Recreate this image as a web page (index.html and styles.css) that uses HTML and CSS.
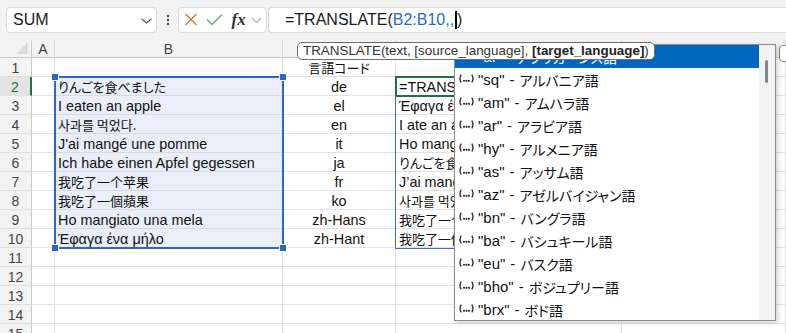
FILE: index.html
```html
<!DOCTYPE html>
<html>
<head>
<meta charset="utf-8">
<link rel="stylesheet" href="styles.css">
</head>
<body>
<div class="app">
  <div class="topbar">
    <div class="namebox">
      <span>SUM</span>
      <svg class="chev" width="11" height="6" viewBox="0 0 11 6"><polyline points="0.5,0.8 5.5,5 10.5,0.8" fill="none" stroke="#555" stroke-width="1.2"/></svg>
    </div>
    <div class="dots">
      <svg width="21" height="26" viewBox="0 0 21 26"><circle cx="11" cy="9" r="1.2" fill="#444"/><circle cx="11" cy="13" r="1.2" fill="#444"/><circle cx="11" cy="17" r="1.2" fill="#444"/></svg>
    </div>
    <div class="fbtns">
      <svg width="88" height="24" viewBox="0 0 88 24">
        <line x1="6.5" y1="6" x2="17.5" y2="17" stroke="#d4793a" stroke-width="1.5"/>
        <line x1="17.5" y1="6" x2="6.5" y2="17" stroke="#d4793a" stroke-width="1.5"/>
        <polyline points="28,11.5 33,16.5 43,6.5" fill="none" stroke="#6aab7e" stroke-width="1.5"/>
        <text x="52.5" y="17" class="fx">fx</text>
        <polyline points="73,10 77.5,14.5 82,10" fill="none" stroke="#b3b3b3" stroke-width="1.2"/>
      </svg>
    </div>
    <div class="formula"><span class="fn">=TRANSLATE(</span><span class="ref">B2:B10,,</span><span class="caret"></span><span class="fn">)</span></div>
  </div>

  <div class="grid">
    <div class="corner"><svg width="12" height="12" viewBox="0 0 12 12"><polygon points="12,0 12,12 0,12" fill="#dcdcdc"/></svg></div>
    <div class="ch">A</div><div class="ch">B</div><div class="ch">C</div><div class="ch">D</div><div class="ch">E</div>

    <div class="rh">1</div><div class="c"></div><div class="c"></div><div class="c ctr"><span class="ja">言語コード</span></div><div class="c"></div><div class="c"></div>
    <div class="rh act">2</div><div class="c"></div><div class="c sel"><span class="ja">りんごを食べました</span></div><div class="c ctr">de</div><div class="c">=TRANSLATE(B2:B10,,)</div><div class="c"></div>
    <div class="rh">3</div><div class="c"></div><div class="c sel">I eaten an apple</div><div class="c ctr">el</div><div class="c">Έφαγα ένα μήλο</div><div class="c"></div>
    <div class="rh">4</div><div class="c"></div><div class="c sel"><span class="ko">사과를 먹었다.</span></div><div class="c ctr">en</div><div class="c">I ate an apple</div><div class="c"></div>
    <div class="rh">5</div><div class="c"></div><div class="c sel">J'ai mangé une pomme</div><div class="c ctr">it</div><div class="c">Ho mangiato una mela</div><div class="c"></div>
    <div class="rh">6</div><div class="c"></div><div class="c sel">Ich habe einen Apfel gegessen</div><div class="c ctr">ja</div><div class="c"><span class="ja">りんごを食べました</span></div><div class="c"></div>
    <div class="rh">7</div><div class="c"></div><div class="c sel"><span class="zh">我吃了一个苹果</span></div><div class="c ctr">fr</div><div class="c">J’ai mangé une pomme</div><div class="c"></div>
    <div class="rh">8</div><div class="c"></div><div class="c sel"><span class="tc">我吃了一個蘋果</span></div><div class="c ctr">ko</div><div class="c"><span class="ko">사과를 먹었다.</span></div><div class="c"></div>
    <div class="rh">9</div><div class="c"></div><div class="c sel">Ho mangiato una mela</div><div class="c ctr">zh-Hans</div><div class="c"><span class="zh">我吃了一个苹果</span></div><div class="c"></div>
    <div class="rh">10</div><div class="c"></div><div class="c sel">Έφαγα ένα μήλο</div><div class="c ctr">zh-Hant</div><div class="c"><span class="tc">我吃了一個蘋果</span></div><div class="c"></div>
    <div class="rh">11</div><div class="c"></div><div class="c"></div><div class="c"></div><div class="c"></div><div class="c"></div>
    <div class="rh">12</div><div class="c"></div><div class="c"></div><div class="c"></div><div class="c"></div><div class="c"></div>
    <div class="rh">13</div><div class="c"></div><div class="c"></div><div class="c"></div><div class="c"></div><div class="c"></div>
    <div class="rh">14</div><div class="c"></div><div class="c"></div><div class="c"></div><div class="c"></div><div class="c"></div>
    <div class="rh">15</div><div class="c"></div><div class="c"></div><div class="c"></div><div class="c"></div><div class="c"></div>
  </div>

  <div class="selbox"></div>
  <div class="handle h-tl"></div>
  <div class="handle h-tr"></div>
  <div class="handle h-bl"></div>
  <div class="handle h-br"></div>
  <div class="spill"></div>
  <div class="active"></div>

  <div class="edgebox"></div>

  <div class="dropdown">
    <div class="list">
      <div class="item hl"><svg class="ic" width="17" height="9" viewBox="0 0 17 9"><path d="M3.2 0.6 Q0.8 4.5 3.2 8.4 M13.8 0.6 Q16.2 4.5 13.8 8.4" fill="none" stroke="#fff" stroke-width="1.4"/><circle cx="6" cy="6.8" r="1.1" fill="#fff"/><circle cx="8.5" cy="6.8" r="1.1" fill="#fff"/><circle cx="11" cy="6.8" r="1.1" fill="#fff"/></svg><span>"af"</span><span class="dash">-</span><span class="jp">アフリカーンス語</span></div>
      <div class="item"><svg class="ic" width="17" height="9" viewBox="0 0 17 9"><path d="M3.2 0.6 Q0.8 4.5 3.2 8.4 M13.8 0.6 Q16.2 4.5 13.8 8.4" fill="none" stroke="#333" stroke-width="1.4"/><circle cx="6" cy="6.8" r="1.1" fill="#333"/><circle cx="8.5" cy="6.8" r="1.1" fill="#333"/><circle cx="11" cy="6.8" r="1.1" fill="#333"/></svg><span>"sq"</span><span class="dash">-</span><span class="jp">アルバニア語</span></div>
      <div class="item"><svg class="ic" width="17" height="9" viewBox="0 0 17 9"><path d="M3.2 0.6 Q0.8 4.5 3.2 8.4 M13.8 0.6 Q16.2 4.5 13.8 8.4" fill="none" stroke="#333" stroke-width="1.4"/><circle cx="6" cy="6.8" r="1.1" fill="#333"/><circle cx="8.5" cy="6.8" r="1.1" fill="#333"/><circle cx="11" cy="6.8" r="1.1" fill="#333"/></svg><span>"am"</span><span class="dash">-</span><span class="jp">アムハラ語</span></div>
      <div class="item"><svg class="ic" width="17" height="9" viewBox="0 0 17 9"><path d="M3.2 0.6 Q0.8 4.5 3.2 8.4 M13.8 0.6 Q16.2 4.5 13.8 8.4" fill="none" stroke="#333" stroke-width="1.4"/><circle cx="6" cy="6.8" r="1.1" fill="#333"/><circle cx="8.5" cy="6.8" r="1.1" fill="#333"/><circle cx="11" cy="6.8" r="1.1" fill="#333"/></svg><span>"ar"</span><span class="dash">-</span><span class="jp">アラビア語</span></div>
      <div class="item"><svg class="ic" width="17" height="9" viewBox="0 0 17 9"><path d="M3.2 0.6 Q0.8 4.5 3.2 8.4 M13.8 0.6 Q16.2 4.5 13.8 8.4" fill="none" stroke="#333" stroke-width="1.4"/><circle cx="6" cy="6.8" r="1.1" fill="#333"/><circle cx="8.5" cy="6.8" r="1.1" fill="#333"/><circle cx="11" cy="6.8" r="1.1" fill="#333"/></svg><span>"hy"</span><span class="dash">-</span><span class="jp">アルメニア語</span></div>
      <div class="item"><svg class="ic" width="17" height="9" viewBox="0 0 17 9"><path d="M3.2 0.6 Q0.8 4.5 3.2 8.4 M13.8 0.6 Q16.2 4.5 13.8 8.4" fill="none" stroke="#333" stroke-width="1.4"/><circle cx="6" cy="6.8" r="1.1" fill="#333"/><circle cx="8.5" cy="6.8" r="1.1" fill="#333"/><circle cx="11" cy="6.8" r="1.1" fill="#333"/></svg><span>"as"</span><span class="dash">-</span><span class="jp">アッサム語</span></div>
      <div class="item"><svg class="ic" width="17" height="9" viewBox="0 0 17 9"><path d="M3.2 0.6 Q0.8 4.5 3.2 8.4 M13.8 0.6 Q16.2 4.5 13.8 8.4" fill="none" stroke="#333" stroke-width="1.4"/><circle cx="6" cy="6.8" r="1.1" fill="#333"/><circle cx="8.5" cy="6.8" r="1.1" fill="#333"/><circle cx="11" cy="6.8" r="1.1" fill="#333"/></svg><span>"az"</span><span class="dash">-</span><span class="jp">アゼルバイジャン語</span></div>
      <div class="item"><svg class="ic" width="17" height="9" viewBox="0 0 17 9"><path d="M3.2 0.6 Q0.8 4.5 3.2 8.4 M13.8 0.6 Q16.2 4.5 13.8 8.4" fill="none" stroke="#333" stroke-width="1.4"/><circle cx="6" cy="6.8" r="1.1" fill="#333"/><circle cx="8.5" cy="6.8" r="1.1" fill="#333"/><circle cx="11" cy="6.8" r="1.1" fill="#333"/></svg><span>"bn"</span><span class="dash">-</span><span class="jp">バングラ語</span></div>
      <div class="item"><svg class="ic" width="17" height="9" viewBox="0 0 17 9"><path d="M3.2 0.6 Q0.8 4.5 3.2 8.4 M13.8 0.6 Q16.2 4.5 13.8 8.4" fill="none" stroke="#333" stroke-width="1.4"/><circle cx="6" cy="6.8" r="1.1" fill="#333"/><circle cx="8.5" cy="6.8" r="1.1" fill="#333"/><circle cx="11" cy="6.8" r="1.1" fill="#333"/></svg><span>"ba"</span><span class="dash">-</span><span class="jp">バシュキール語</span></div>
      <div class="item"><svg class="ic" width="17" height="9" viewBox="0 0 17 9"><path d="M3.2 0.6 Q0.8 4.5 3.2 8.4 M13.8 0.6 Q16.2 4.5 13.8 8.4" fill="none" stroke="#333" stroke-width="1.4"/><circle cx="6" cy="6.8" r="1.1" fill="#333"/><circle cx="8.5" cy="6.8" r="1.1" fill="#333"/><circle cx="11" cy="6.8" r="1.1" fill="#333"/></svg><span>"eu"</span><span class="dash">-</span><span class="jp">バスク語</span></div>
      <div class="item"><svg class="ic" width="17" height="9" viewBox="0 0 17 9"><path d="M3.2 0.6 Q0.8 4.5 3.2 8.4 M13.8 0.6 Q16.2 4.5 13.8 8.4" fill="none" stroke="#333" stroke-width="1.4"/><circle cx="6" cy="6.8" r="1.1" fill="#333"/><circle cx="8.5" cy="6.8" r="1.1" fill="#333"/><circle cx="11" cy="6.8" r="1.1" fill="#333"/></svg><span>"bho"</span><span class="dash">-</span><span class="jp">ボジュプリー語</span></div>
      <div class="item"><svg class="ic" width="17" height="9" viewBox="0 0 17 9"><path d="M3.2 0.6 Q0.8 4.5 3.2 8.4 M13.8 0.6 Q16.2 4.5 13.8 8.4" fill="none" stroke="#333" stroke-width="1.4"/><circle cx="6" cy="6.8" r="1.1" fill="#333"/><circle cx="8.5" cy="6.8" r="1.1" fill="#333"/><circle cx="11" cy="6.8" r="1.1" fill="#333"/></svg><span>"brx"</span><span class="dash">-</span><span class="jp">ボド語</span></div>
    </div>
    <div class="scroll"><div class="thumb"></div></div>
  </div>

  <div class="tip">TRANSLATE(text, [source_language], <b>[target_language]</b>)</div>
</div>
</body>
</html>
```

FILE: styles.css
```css
* { box-sizing: border-box; margin: 0; padding: 0; }
body {
  width: 786px; height: 333px; overflow: hidden; background: #fff;
  font-family: "Liberation Sans", "Noto Sans CJK JP", sans-serif;
  color: #222;
}
.app { position: relative; width: 786px; height: 333px; overflow: hidden; }

.topbar {
  height: 40px; background: #f3f3f3;
  display: flex; align-items: flex-start;
  padding: 7px 0 0 6px;
}
.namebox {
  width: 151px; height: 26px; background: #fff;
  border: 1px solid #dadada; border-radius: 4px;
  display: flex; align-items: center; justify-content: space-between;
  padding: 0 4px 0 6px; font-size: 16px; color: #1a1a1a;
}
.chev { margin-top: 1px; }
.dots { width: 21px; height: 26px; }
.fbtns {
  width: 89px; height: 26px; background: #fff;
  border: 1px solid #dadada; border-radius: 4px;
}
.fbtns svg { display: block; }
.fx { font-family: "Liberation Serif", serif; font-style: italic; font-weight: bold; font-size: 17px; fill: #333; }
.formula {
  flex: 1; height: 26px; margin-left: 1px; background: #fff;
  border: 1px solid #dadada; border-right: none; border-radius: 4px 0 0 4px;
  padding-left: 16px; font-size: 16px;
  display: flex; align-items: center;
}
.fn { color: #1a1a1a; }
.ref { color: #1f6cc8; }
.caret { width: 2px; height: 18px; background: #000; margin: 0 0 0 1px; }

.grid {
  display: grid;
  grid-template-columns: 32px 23px 228px 113px 226px 164px;
  grid-template-rows: 18px repeat(15, 19px);
  font-size: 14.4px;
}
.corner {
  background: #f3f3f3; border-right: 1px solid #c9c9c9; border-bottom: 1px solid #c9c9c9;
  display: flex; align-items: flex-end; justify-content: flex-end; padding: 0 3px 3px 0;
}
.corner svg { display: block; }
.ch {
  background: #f3f3f3; border-right: 1px solid #dadada; border-bottom: 1px solid #c9c9c9;
  display: flex; align-items: center; justify-content: center; color: #444; font-size: 14px;
}
.rh {
  background: #f3f3f3; border-right: 1px solid #c9c9c9; border-bottom: 1px solid #e0e0e0;
  display: flex; align-items: center; justify-content: center; color: #444; padding-top: 1px; font-size: 14px;
}
.rh.act { background: #e3e3e3; color: #1e7145; border-right: 2px solid #1e7145; }
.c {
  border-right: 1px solid #e1e1e1; border-bottom: 1px solid #e1e1e1;
  padding: 1px 3px 0 3px; white-space: nowrap; overflow: hidden;
  display: flex; align-items: center; color: #111;
}
.c.ctr { justify-content: center; }
.c.sel { background: #e9eef8; border-bottom-color: #d6dbe3; }
.ja { font-family: "Noto Sans CJK JP", sans-serif; font-size: 13px; font-feature-settings: "palt"; }
.ko { font-family: "Noto Sans CJK KR", sans-serif; font-size: 13px; }
.zh { font-family: "Noto Sans CJK SC", sans-serif; font-size: 13px; }
.tc { font-family: "Noto Sans CJK TC", sans-serif; font-size: 13px; }

.selbox {
  position: absolute; left: 54px; top: 76px; width: 230px; height: 173px;
  border: 2px solid #2f65c5;
}
.handle {
  position: absolute; width: 6px; height: 6px; background: #2f65c5;
  box-shadow: 0 0 0 1px #fff;
}
.h-tl { left: 52px; top: 74px; }
.h-tr { left: 280px; top: 74px; }
.h-bl { left: 52px; top: 245px; }
.h-br { left: 280px; top: 245px; }
.spill {
  position: absolute; left: 395px; top: 95px; width: 229px; height: 154px;
  border: 1px solid #3f70c8;
}
.active {
  position: absolute; left: 395px; top: 76px; width: 229px; height: 21px;
  border: 2px solid #1e7145;
}
.edgebox {
  position: absolute; left: 779px; top: 45px; width: 30px; height: 17px;
  border: 1px solid #8a8a8a; border-radius: 4px; background: #fff;
}

.dropdown {
  position: absolute; left: 454px; top: 44px; width: 322px; height: 277px;
  border: 1px solid #8c8c8c; background: #fff;
  box-shadow: 2px 2px 5px rgba(0,0,0,0.18);
  display: flex;
}
.list { flex: 1; }
.item {
  height: 23px; display: flex; align-items: center;
  padding-left: 3px; font-size: 15px; color: #111; white-space: nowrap;
}
.item.hl { background: #0067c0; color: #fff; }
.ic { align-self: flex-start; margin-top: 6px; margin-right: 3px; flex: none; }
.dash { margin: 0 5px 0 5px; }
.jp { font-family: "Noto Sans CJK JP", sans-serif; font-size: 14px; font-feature-settings: "palt"; }
.scroll { width: 16px; background: #f3f3f3; position: relative; }
.thumb {
  position: absolute; left: 6px; top: 15px; width: 3px; height: 23px;
  background: #858585; border-radius: 2px;
}

.tip {
  position: absolute; left: 297px; top: 42px; width: 358px; height: 18px;
  border: 1px solid #6e6e6e; border-radius: 5px; background: #fff;
  font-size: 13.4px; line-height: 16px; padding-left: 5px; color: #333;
  white-space: nowrap;
}
.tip b { font-weight: bold; color: #222; }
```
